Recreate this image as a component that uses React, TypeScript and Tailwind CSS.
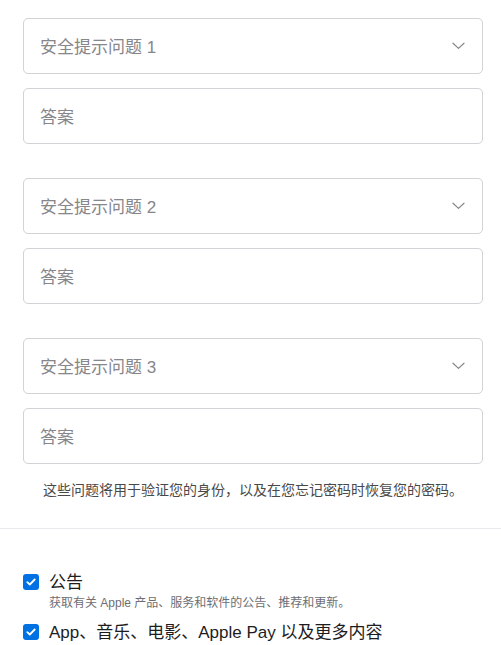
const questions = ["安全提示问题 1", "安全提示问题 2", "安全提示问题 3"];

function Chevron() {
  return (
    <svg width="13" height="8" viewBox="0 0 13 8" fill="none" className="shrink-0">
      <path d="M1 1.2 L6.5 6.4 L12 1.2" stroke="#86868b" strokeWidth="1.2" strokeLinecap="round" strokeLinejoin="round" />
    </svg>
  );
}

function Check() {
  return (
    <span className="mt-[1px] flex h-[16px] w-[16px] shrink-0 items-center justify-center rounded-[3px] bg-[#0071e3]">
      <svg width="10" height="8" viewBox="0 0 10 8" fill="none">
        <path d="M1.3 4.2 L3.8 6.5 L8.7 1.5" stroke="white" strokeWidth="1.8" strokeLinecap="round" strokeLinejoin="round" />
      </svg>
    </span>
  );
}

export default function App() {
  return (
    <div
      className="min-h-screen bg-white"
      style={{ fontFamily: '"Liberation Sans", "Noto Sans CJK SC", sans-serif' }}
    >
      <div className="px-[23px] pt-[18px]">
        <div className="flex w-[460px] flex-col gap-[34px]">
          {questions.map((q) => (
            <div key={q} className="flex flex-col gap-[14px]">
              <div className="flex h-[56px] items-center justify-between rounded-[5px] border border-[#d2d2d7] pl-[16px] pr-[17px]">
                <span className="pt-[4px] text-[17px] text-[#86868b]">{q}</span>
                <Chevron />
              </div>
              <div className="flex h-[56px] items-center rounded-[5px] border border-[#d2d2d7] px-[16px]">
                <span className="pt-[3px] text-[17px] text-[#86868b]">答案</span>
              </div>
            </div>
          ))}
        </div>
        <p className="w-[460px] pt-[16px] text-center text-[14px] leading-[20px] text-[#494949]">
          这些问题将用于验证您的身份，以及在您忘记密码时恢复您的密码。
        </p>
      </div>
      <div className="mt-[28px] h-px w-full bg-[#e8e8ed]" />
      <div className="flex flex-col gap-[12px] px-[23px] pt-[44px]">
        <div className="flex gap-[10px]">
          <Check />
          <div className="flex flex-col">
            <span className="pt-[1px] text-[17px] leading-[18px] text-[#1d1d1f]">公告</span>
            <span className="mt-[3px] text-[12px] leading-[16px] text-[#6e6e73]">
              获取有关 Apple 产品、服务和软件的公告、推荐和更新。
            </span>
          </div>
        </div>
        <div className="flex gap-[10px]">
          <Check />
          <span className="pt-[1px] text-[17px] leading-[18px] text-[#1d1d1f]">App、音乐、电影、Apple Pay 以及更多内容</span>
        </div>
      </div>
    </div>
  );
}
